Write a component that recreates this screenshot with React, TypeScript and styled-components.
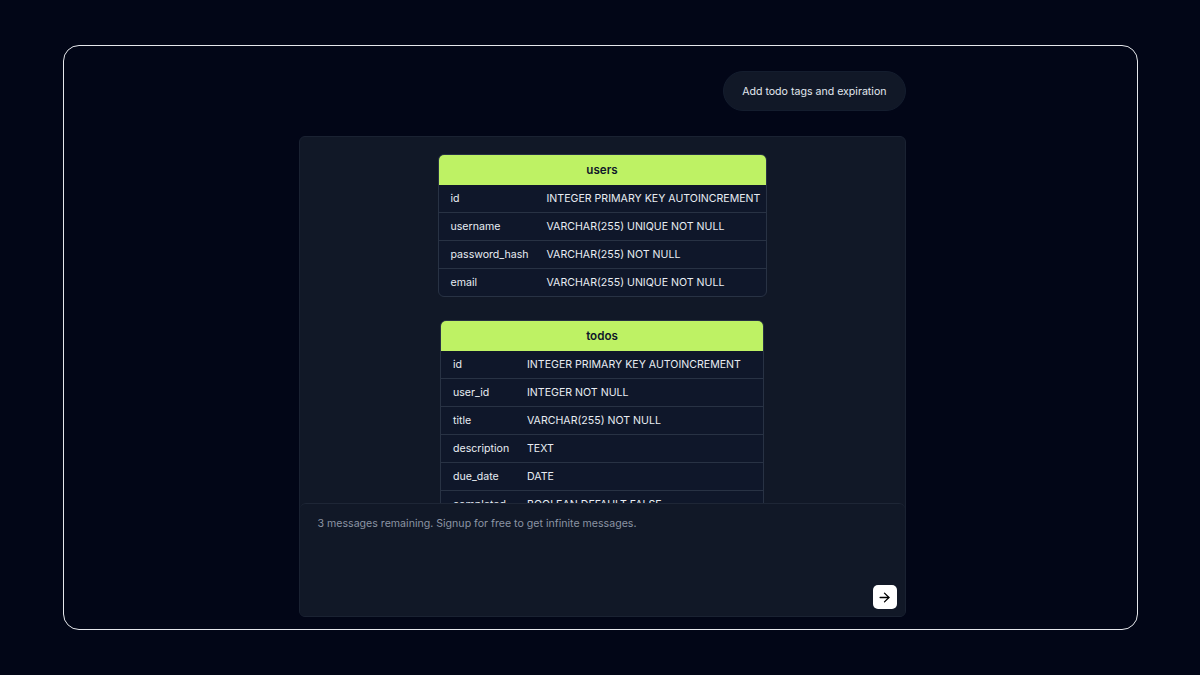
import React from "react";
import styled, { createGlobalStyle } from "styled-components";
import { ArrowRight } from "lucide-react";

const Global = createGlobalStyle`
  html, body { margin: 0; padding: 0; background: #020617; }
  body { font-family: Inter, "Noto Sans", "Liberation Sans", sans-serif; }
  * { box-sizing: border-box; }
`;

const Page = styled.div`
  width: 1200px;
  height: 675px;
  display: flex;
  align-items: center;
  justify-content: center;
  background: #020617;
`;

const Frame = styled.div`
  width: 1075px;
  height: 585px;
  border: 1px solid #e5e7eb;
  border-radius: 16px;
  padding: 25px 231px 12px 235px;
  display: flex;
  flex-direction: column;
  gap: 25px;
`;

const BubbleRow = styled.div`
  display: flex;
  justify-content: flex-end;
`;

const Bubble = styled.div`
  height: 40px;
  padding: 0 18px;
  border-radius: 20px;
  background: #111827;
  border: 1px solid #141d2e;
  color: #e2e8f0;
  font-size: 10.6px;
  display: flex;
  align-items: center;
`;

const Panel = styled.div`
  flex: 1;
  min-height: 0;
  background: #111827;
  border: 1px solid #1a2232;
  border-radius: 6px;
  display: flex;
  flex-direction: column;
  overflow: hidden;
`;

const Scroll = styled.div`
  flex: 1;
  min-height: 0;
  overflow: hidden;
  padding-top: 17px;
  display: flex;
  flex-direction: column;
  align-items: center;
  gap: 23px;
`;

const Table = styled.div<{ $w: number; $c1: number }>`
  width: ${(p) => p.$w}px;
  flex-shrink: 0;
  border: 1px solid #283244;
  border-radius: 6px;
  overflow: hidden;
  background: #0f172a;
  display: grid;
  grid-template-columns: ${(p) => p.$c1}px 1fr;
`;

const Head = styled.div`
  grid-column: 1 / -1;
  height: 30px;
  background: #bef264;
  color: #0f172a;
  font-weight: 600;
  font-size: 11.6px;
  display: flex;
  align-items: center;
  justify-content: center;
`;

const Cell = styled.div`
  height: 28px;
  padding-left: 12px;
  display: flex;
  align-items: center;
  font-size: 10.6px;
  color: #e8edf3;
  white-space: nowrap;
  border-bottom: 1px solid #283244;
  &:nth-last-child(-n + 2) {
    border-bottom: none;
    height: 27px;
  }
`;

const InputBox = styled.div`
  height: 113px;
  flex-shrink: 0;
  background: #111827;
  border-top: 1px solid #1e2636;
  border-radius: 6px 6px 0 0;
  padding: 13px 8px 7px 18px;
  display: flex;
  flex-direction: column;
  justify-content: space-between;
`;

const Hint = styled.div`
  font-size: 10.6px;
  color: #8b94a3;
`;

const SendRow = styled.div`
  display: flex;
  justify-content: flex-end;
`;

const SendButton = styled.button`
  width: 24px;
  height: 24px;
  border: none;
  border-radius: 5px;
  background: #ffffff;
  color: #000;
  padding: 0;
  display: flex;
  align-items: center;
  justify-content: center;
`;

type Col = [string, string];

const users: Col[] = [
  ["id", "INTEGER PRIMARY KEY AUTOINCREMENT"],
  ["username", "VARCHAR(255) UNIQUE NOT NULL"],
  ["password_hash", "VARCHAR(255) NOT NULL"],
  ["email", "VARCHAR(255) UNIQUE NOT NULL"],
];

const todos: Col[] = [
  ["id", "INTEGER PRIMARY KEY AUTOINCREMENT"],
  ["user_id", "INTEGER NOT NULL"],
  ["title", "VARCHAR(255) NOT NULL"],
  ["description", "TEXT"],
  ["due_date", "DATE"],
  ["completed", "BOOLEAN DEFAULT FALSE"],
];

function SchemaTable({ name, rows, w, c1 }: { name: string; rows: Col[]; w: number; c1: number }) {
  return (
    <Table $w={w} $c1={c1}>
      <Head>{name}</Head>
      {rows.map(([a, b], i) => (
        <React.Fragment key={i}>
          <Cell>{a}</Cell>
          <Cell>{b}</Cell>
        </React.Fragment>
      ))}
    </Table>
  );
}

export default function App() {
  return (
    <Page>
      <Global />
      <Frame>
        <BubbleRow>
          <Bubble>Add todo tags and expiration</Bubble>
        </BubbleRow>
        <Panel>
          <Scroll>
            <SchemaTable name="users" rows={users} w={329} c1={96} />
            <SchemaTable name="todos" rows={todos} w={324} c1={74} />
          </Scroll>
          <InputBox>
            <Hint>3 messages remaining. Signup for free to get infinite messages.</Hint>
            <SendRow>
              <SendButton>
                <ArrowRight size={15} strokeWidth={2.2} />
              </SendButton>
            </SendRow>
          </InputBox>
        </Panel>
      </Frame>
    </Page>
  );
}
